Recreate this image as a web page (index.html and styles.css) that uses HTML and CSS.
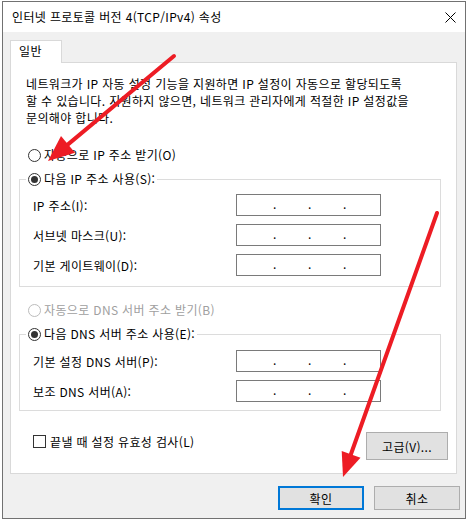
FILE: index.html
```html
<!DOCTYPE html>
<html lang="ko">
<head>
<meta charset="utf-8">
<title>인터넷 프로토콜 버전 4(TCP/IPv4) 속성</title>
<link rel="stylesheet" href="styles.css">
</head>
<body>
<div class="window">
  <div class="titlebar">
    <span class="title">인터넷 프로토콜 버전 4(TCP/IPv4) 속성</span>
    <svg class="close" width="11" height="11" viewBox="0 0 11 11"><path d="M0.5 0.5L10.5 10.5M10.5 0.5L0.5 10.5" stroke="#000" stroke-width="1" fill="none"/></svg>
  </div>
  <div class="client">
    <div class="tabs"><div class="tab">일반</div></div>
    <div class="panel">
      <p class="desc">네트워크가 IP 자동 설정 기능을 지원하면 IP 설정이 자동으로 할당되도록<br>할 수 있습니다. 지원하지 않으면, 네트워크 관리자에게 적절한 IP 설정값을<br>문의해야 합니다.</p>

      <div class="radio first"><span class="circle"></span>자동으로 IP 주소 받기(O)</div>

      <fieldset class="group">
        <legend><span class="radio"><span class="circle checked"></span>다음 IP 주소 사용(S):</span></legend>
        <div class="rows">
          <div class="row"><span class="lbl">IP 주소(I):</span><div class="ip"><i>.</i><i>.</i><i>.</i></div></div>
          <div class="row"><span class="lbl">서브넷 마스크(U):</span><div class="ip"><i>.</i><i>.</i><i>.</i></div></div>
          <div class="row"><span class="lbl">기본 게이트웨이(D):</span><div class="ip"><i>.</i><i>.</i><i>.</i></div></div>
        </div>
      </fieldset>

      <div class="radio disabled"><span class="circle"></span>자동으로 DNS 서버 주소 받기(B)</div>

      <fieldset class="group g2">
        <legend><span class="radio"><span class="circle checked"></span>다음 DNS 서버 주소 사용(E):</span></legend>
        <div class="rows">
          <div class="row"><span class="lbl">기본 설정 DNS 서버(P):</span><div class="ip"><i>.</i><i>.</i><i>.</i></div></div>
          <div class="row"><span class="lbl">보조 DNS 서버(A):</span><div class="ip"><i>.</i><i>.</i><i>.</i></div></div>
        </div>
      </fieldset>

      <div class="bottomrow">
        <div class="check"><span class="box"></span>끝낼 때 설정 유효성 검사(L)</div>
        <button class="btn adv">고급(V)...</button>
      </div>
    </div>
    <div class="actions">
      <button class="btn ok">확인</button>
      <button class="btn">취소</button>
    </div>
  </div>
</div>
<svg class="arrows" width="469" height="521" viewBox="0 0 469 521">
  <line x1="174" y1="56" x2="68" y2="144.4" stroke="#ed1c24" stroke-width="4" stroke-linecap="round"/>
  <polygon points="48,161 75,152.8 61,136" fill="#ed1c24"/>
  <line x1="437" y1="213" x2="351" y2="454" stroke="#ed1c24" stroke-width="4" stroke-linecap="round"/>
  <polygon points="343,477 360.5,457.8 341.7,451" fill="#ed1c24"/>
</svg>
</body>
</html>
```
FILE: styles.css
```css
* { box-sizing: border-box; }
html, body { margin: 0; padding: 0; background: #fff; }
body {
  font-family: "Noto Sans CJK KR", "Noto Sans", sans-serif;
  font-size: 12px;
  letter-spacing: 0.35px;
  color: #000;
  width: 469px;
  height: 521px;
  overflow: hidden;
}
.window {
  margin: 1px 0 0 2px;
  width: 464px;
  height: 518px;
  border: 1px solid #717171;
  background: #f0f0f0;
  display: flex;
  flex-direction: column;
}
.titlebar {
  height: 30px;
  background: #fff;
  display: flex;
  align-items: center;
  justify-content: space-between;
  padding: 0 9px 0 9px;
}
.title { font-size: 12px; line-height: 16px; }
.close { display: block; }
.client {
  padding: 8px 5px 0 7px;
  display: flex;
  flex-direction: column;
}
.tabs { display: flex; }
.tab {
  width: 52px;
  height: 23px;
  border: 1px solid #d9d9d9;
  border-bottom: none;
  background: #fff;
  padding-left: 8px;
  line-height: 20px;
  margin-bottom: -1px;
  position: relative;
  z-index: 1;
}
.panel {
  width: 447px;
  border: 1px solid #d9d9d9;
  background: #fff;
  padding: 12px 8px 13px 8px;
}
.desc {
  margin: 0 0 0 7px;
  line-height: 17px;
  white-space: nowrap;
}
.radio {
  display: flex;
  align-items: center;
  height: 16px;
  line-height: 16px;
  white-space: nowrap;
}
.radio.first { margin: 21px 0 0 9px; }
.radio.disabled { margin: 15px 0 0 9px; color: #a0a0a0; }
.circle {
  width: 13px;
  height: 13px;
  border: 1px solid #333;
  border-radius: 50%;
  background: #fff;
  margin-right: 3px;
  display: flex;
  align-items: center;
  justify-content: center;
  flex: none;
}
.radio.disabled .circle { border-color: #bcbcbc; }
.circle.checked::after {
  content: "";
  width: 7px;
  height: 7px;
  border-radius: 50%;
  background: #333;
}
.group {
  margin: 8px 7px 0 0;
  padding: 0 0 10px 0;
  border: 1px solid #dcdcdc;
  min-width: 0;
}
.group.g2 { margin-top: 8px; padding-bottom: 8px; }
.group legend {
  margin-left: 6px;
  padding: 0 2px 0 2px;
}
.rows {
  padding-left: 13px;
  margin-top: 7px;
  display: flex;
  flex-direction: column;
  gap: 8px;
}
.g2 .rows { margin-top: 8px; }
.row {
  display: flex;
  align-items: center;
  height: 22px;
}
.lbl { width: 203px; flex: none; }
.ip {
  width: 145px;
  height: 22px;
  border: 1px solid #7a7a7a;
  background: #fff;
  display: flex;
  padding-left: 36px;
  line-height: 18px;
  letter-spacing: 0;
}
.ip i {
  font-style: normal;
  width: 35px;
  flex: none;
}
.bottomrow {
  margin-top: 21px;
  display: flex;
  justify-content: space-between;
  align-items: flex-start;
}
.check {
  display: flex;
  align-items: center;
  height: 16px;
  margin: 1px 0 0 14px;
  white-space: nowrap;
}
.box {
  width: 13px;
  height: 13px;
  border: 1px solid #333;
  background: #fff;
  margin-right: 4px;
  flex: none;
}
.btn {
  font-family: inherit;
  font-size: 12px;
  letter-spacing: 0.35px;
  color: #000;
  background: #e1e1e1;
  border: 1px solid #adadad;
  height: 24px;
  width: 86px;
  padding: 0;
  margin: 0;
}
.btn.adv { width: 82px; height: 28px; }
.btn.ok { border: 2px solid #0078d7; }
.actions {
  margin-top: 12px;
  display: flex;
  justify-content: flex-end;
  gap: 10px;
}
.arrows {
  position: absolute;
  left: 0;
  top: 0;
  pointer-events: none;
}
```
